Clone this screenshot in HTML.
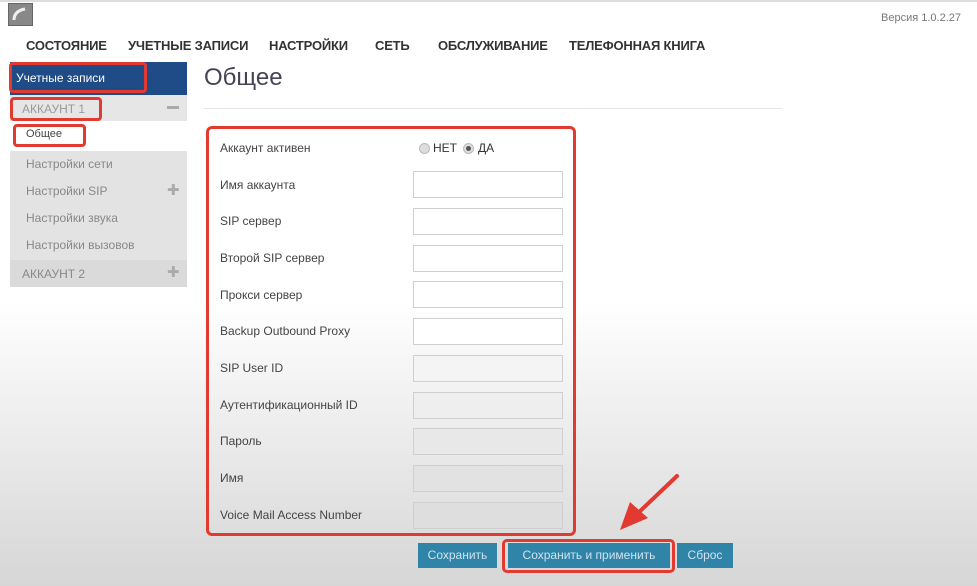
<!DOCTYPE html>
<html><head><meta charset="utf-8"><style>
body{margin:0;width:977px;height:586px;overflow:hidden;font-family:"Liberation Sans",sans-serif;position:relative;background:linear-gradient(#fff 0,#fff 300px,#d6d6d6 586px);}
.a{position:absolute}
.nav{top:38px;font-size:13px;color:#333;font-weight:bold;letter-spacing:-0.2px}
.lbl{left:220px;font-size:12px;color:#444}
.inp{left:413px;width:148px;height:25px;border:1px solid #cfcfcf;background:#fff}
.red{border:3px solid #e23a30;border-radius:5px}
.side{left:10px;width:177px;background:#e3e3e3;font-size:12px;color:#888}
.btn{top:543px;height:25px;background:#2f84a8;color:#cfe3ee;font-size:12px;line-height:25px;text-align:center}
</style></head><body>
<div class="a" style="left:0;top:0;width:977px;height:2px;background:#ddd"></div>
<div class="a" style="left:8px;top:3px;width:23px;height:21px;background:#888;border:1px solid #666"></div>
<svg class="a" style="left:10px;top:5px" width="20" height="18"><path d="M4 15 Q4 6 15 4" stroke="#eee" stroke-width="3" fill="none"/></svg>
<div class="a" style="right:16px;top:12px;font-size:11px;color:#777">Версия 1.0.2.27</div>
<div class="a nav" style="left:26px">СОСТОЯНИЕ</div>
<div class="a nav" style="left:128px">УЧЕТНЫЕ ЗАПИСИ</div>
<div class="a nav" style="left:269px">НАСТРОЙКИ</div>
<div class="a nav" style="left:375px">СЕТЬ</div>
<div class="a nav" style="left:438px">ОБСЛУЖИВАНИЕ</div>
<div class="a nav" style="left:569px">ТЕЛЕФОННАЯ КНИГА</div>

<div class="a" style="left:10px;top:62px;width:177px;height:33px;background:#1f4b86"></div>
<div class="a red" style="left:9px;top:62px;width:132px;height:25px;border-radius:4px"></div>
<div class="a" style="left:16px;top:71px;color:#fff;font-size:12px">Учетные записи</div>
<div class="a side" style="top:95px;height:26px;background:#e6e6e6"></div>
<div class="a red" style="left:10px;top:97px;width:86px;height:18px;border-radius:4px"></div>
<div class="a" style="left:22px;top:102px;font-size:12px;color:#999">АККАУНТ 1</div>
<div class="a" style="left:167px;top:106px;width:12px;height:3px;background:#aaa"></div>
<div class="a red" style="left:13px;top:124px;width:67px;height:17px;border-radius:4px"></div>
<div class="a" style="left:26px;top:128px;font-size:11px;color:#444">Общее</div>
<div class="a side" style="top:151px;height:109px"></div>
<div class="a" style="left:26px;top:157px;font-size:12px;color:#888">Настройки сети</div>
<div class="a" style="left:26px;top:184px;font-size:12px;color:#888">Настройки SIP</div>
<div class="a" style="left:26px;top:211px;font-size:12px;color:#888">Настройки звука</div>
<div class="a" style="left:26px;top:238px;font-size:12px;color:#888">Настройки вызовов</div>
<div class="a" style="left:167px;top:185px;font-size:15px;color:#aaa;line-height:12px">✚</div>
<div class="a side" style="top:260px;height:27px;background:#dadada"></div>
<div class="a" style="left:22px;top:267px;font-size:12px;color:#888">АККАУНТ 2</div>
<div class="a" style="left:167px;top:267px;font-size:15px;color:#aaa;line-height:12px">✚</div>

<div class="a" style="left:204px;top:64px;font-size:24px;color:#445">Общее</div>
<div class="a" style="left:204px;top:108px;width:578px;height:1px;background:#e4e4e4"></div>
<div class="a red" style="left:206px;top:126px;width:364px;height:404px;border-radius:6px"></div>

<div class="a lbl" style="top:141px">Аккаунт активен</div>
<div class="a" style="left:419px;top:143px;width:9px;height:9px;border-radius:50%;background:#ddd;border:1px solid #bbb"></div>
<div class="a" style="left:433px;top:141px;font-size:12px;color:#333">НЕТ</div>
<div class="a" style="left:463px;top:143px;width:9px;height:9px;border-radius:50%;background:#ddd;border:1px solid #bbb"></div>
<div class="a" style="left:466px;top:146px;width:5px;height:5px;border-radius:50%;background:#555"></div>
<div class="a" style="left:478px;top:141px;font-size:12px;color:#333">ДА</div>

<div class="a lbl" style="top:178px">Имя аккаунта</div><div class="a inp" style="top:171px"></div>
<div class="a lbl" style="top:214px">SIP сервер</div><div class="a inp" style="top:208px"></div>
<div class="a lbl" style="top:251px">Второй SIP сервер</div><div class="a inp" style="top:245px"></div>
<div class="a lbl" style="top:288px">Прокси сервер</div><div class="a inp" style="top:281px"></div>
<div class="a lbl" style="top:324px">Backup Outbound Proxy</div><div class="a inp" style="top:318px"></div>
<div class="a lbl" style="top:361px">SIP User ID</div><div class="a inp" style="top:355px;background:#f4f4f4"></div>
<div class="a lbl" style="top:398px">Аутентификационный ID</div><div class="a inp" style="top:392px;background:#eee"></div>
<div class="a lbl" style="top:434px">Пароль</div><div class="a inp" style="top:428px;background:#e8e8e8"></div>
<div class="a lbl" style="top:471px">Имя</div><div class="a inp" style="top:465px;background:#e2e2e2"></div>
<div class="a lbl" style="top:508px">Voice Mail Access Number</div><div class="a inp" style="top:502px;background:#dedede"></div>

<div class="a btn" style="left:418px;width:79px">Сохранить</div>
<div class="a btn" style="left:508px;width:162px">Сохранить и применить</div>
<div class="a btn" style="left:677px;width:56px">Сброс</div>
<div class="a red" style="left:502px;top:539px;width:167px;height:28px;border-radius:5px"></div>
<svg class="a" style="left:610px;top:470px" width="80" height="70"><line x1="67" y1="6" x2="26" y2="45" stroke="#e23a30" stroke-width="4" stroke-linecap="round"/><polygon points="10,60 20,32 38,48" fill="#e23a30"/></svg>
</body></html>
